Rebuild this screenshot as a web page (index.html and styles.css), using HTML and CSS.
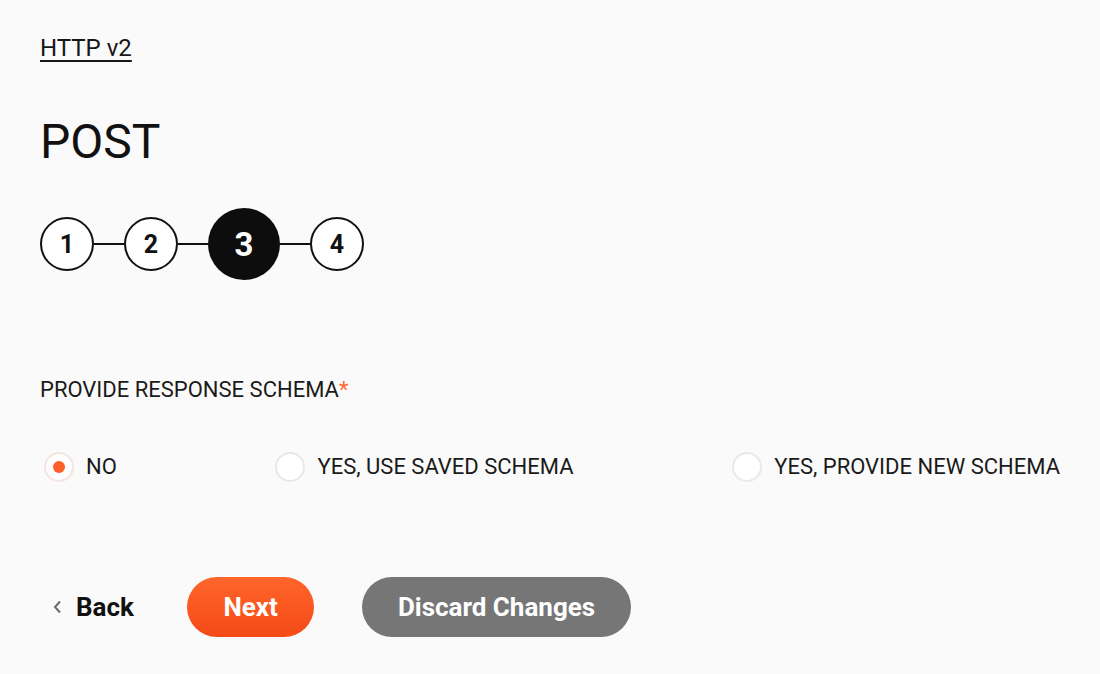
FILE: index.html
```html
<!DOCTYPE html>
<html lang="en">
<head>
<meta charset="utf-8">
<title>POST</title>
<link rel="stylesheet" href="styles.css">
</head>
<body>
<main class="page">
  <a class="crumb" href="#">HTTP v2</a>
  <h1 class="title">POST</h1>
  <ol class="steps">
    <li class="step">1</li>
    <li class="link"></li>
    <li class="step">2</li>
    <li class="link"></li>
    <li class="step active">3</li>
    <li class="link"></li>
    <li class="step">4</li>
  </ol>
  <div class="field-label">PROVIDE RESPONSE SCHEMA<span class="req">*</span></div>
  <div class="radios">
    <label class="radio"><span class="dot checked"></span><span class="rtext">NO</span></label>
    <label class="radio"><span class="dot"></span><span class="rtext">YES, USE SAVED SCHEMA</span></label>
    <label class="radio"><span class="dot"></span><span class="rtext">YES, PROVIDE NEW SCHEMA</span></label>
  </div>
  <div class="actions">
    <button class="back" type="button">
      <svg class="chev" width="9" height="14" viewBox="0 0 9 14"><path d="M7 1.5 L2 7 L7 12.5" fill="none" stroke="#6b6b6b" stroke-width="2"/></svg>
      <span>Back</span>
    </button>
    <button class="btn next" type="button">Next</button>
    <button class="btn discard" type="button">Discard Changes</button>
  </div>
</main>
</body>
</html>
```
FILE: styles.css
```css
html, body {
  margin: 0;
  padding: 0;
  background: #fafafa;
}
body {
  font-family: Roboto, "Liberation Sans", Arial, sans-serif;
  color: #161616;
}
.page {
  padding: 34px 40px 0 40px;
  display: flex;
  flex-direction: column;
  align-items: flex-start;
}
.crumb {
  font-size: 24px;
  line-height: 28px;
  color: #161616;
  text-decoration: underline;
  text-decoration-thickness: 2px;
  text-underline-offset: 4px;
}
.title {
  margin: 52px 0 0 0;
  font-size: 48px;
  line-height: 56px;
  font-weight: 400;
  color: #111;
}
.steps {
  list-style: none;
  margin: 38px 0 0 0;
  padding: 0;
  display: flex;
  align-items: center;
}
.step {
  width: 54px;
  height: 54px;
  box-sizing: border-box;
  border: 2px solid #111;
  border-radius: 50%;
  background: #fff;
  display: flex;
  align-items: center;
  justify-content: center;
  font-weight: 700;
  font-size: 25px;
  color: #111;
}
.step.active {
  width: 72px;
  height: 72px;
  border: none;
  background: #0d0d0d;
  color: #fff;
  font-size: 33px;
}
.link {
  width: 30px;
  height: 2px;
  background: #111;
}
.field-label {
  margin-top: 97px;
  font-size: 22px;
  line-height: 26px;
  color: #1a1a1a;
}
.req {
  color: #ff6a2b;
}
.radios {
  margin-top: 49px;
  align-self: stretch;
  display: flex;
  justify-content: space-between;
  padding-left: 4px;
}
.radio {
  display: flex;
  align-items: center;
  gap: 12px;
  font-size: 22px;
  line-height: 26px;
  color: #1a1a1a;
}
.dot {
  width: 30px;
  height: 30px;
  box-sizing: border-box;
  border: 2px solid #e8e8e8;
  border-radius: 50%;
  background: #fff;
  display: flex;
  align-items: center;
  justify-content: center;
}
.dot.checked {
  border-color: #f3e4df;
}
.dot.checked::after {
  content: "";
  width: 12px;
  height: 12px;
  border-radius: 50%;
  background: #ff5f28;
}
.actions {
  margin-top: 95px;
  display: flex;
  align-items: center;
}
.back {
  border: none;
  background: none;
  padding: 0 0 0 13px;
  display: flex;
  align-items: center;
  gap: 14px;
  font-family: inherit;
  font-weight: 700;
  font-size: 26px;
  color: #111;
  margin-right: 53px;
}
.btn {
  height: 60px;
  border: none;
  border-radius: 30px;
  padding: 0 36.5px;
  font-family: inherit;
  font-weight: 700;
  font-size: 26px;
  color: #fff;
}
.next {
  background: linear-gradient(180deg, #ff652b 0%, #f54a17 100%);
  margin-right: 48px;
}
.discard {
  background: #767677;
  padding: 0 35.5px;
}
```
